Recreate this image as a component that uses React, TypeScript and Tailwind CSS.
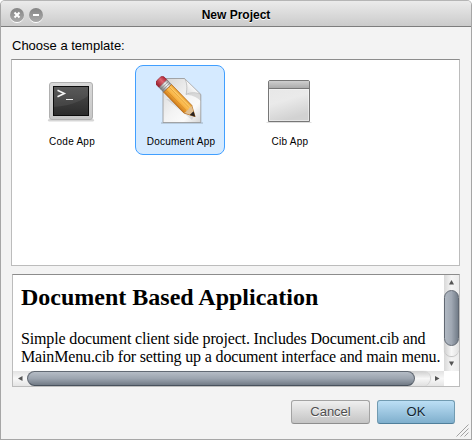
import React from "react";

function CodeIcon() {
  return (
    <svg width="48" height="48" viewBox="0 0 48 48">
      <defs>
        <linearGradient id="screen" x1="0" y1="0" x2="0" y2="1">
          <stop offset="0" stopColor="#4e4e4e" />
          <stop offset="1" stopColor="#2b2b2b" />
        </linearGradient>
        <linearGradient id="bezel" x1="0" y1="0" x2="0" y2="1">
          <stop offset="0" stopColor="#d8d8d8" />
          <stop offset="1" stopColor="#c6c6c6" />
        </linearGradient>
      </defs>
      <rect x="1" y="43" width="46" height="2.5" rx="1.2" fill="#000" opacity="0.16" />
      <rect x="2.5" y="6.5" width="43" height="37" rx="2.5" fill="url(#bezel)" stroke="#b0b0b0" />
      <rect x="6.5" y="10.5" width="35" height="29" fill="url(#screen)" stroke="#0c0c0c" />
      <path d="M7 11H41V20C31 27 20 30 7 31Z" fill="#fff" opacity="0.07" />
      <path d="M10.5 14.2L17.3 17.5L10.5 20.8" fill="none" stroke="#f4f4f4" strokeWidth="1.6" />
      <path d="M19 23.5H26" stroke="#eee" strokeWidth="1.1" />
    </svg>
  );
}

function DocumentIcon() {
  return (
    <svg width="48" height="48" viewBox="0 0 48 48">
      <defs>
        <linearGradient id="paper" x1="0" y1="0" x2="1" y2="1">
          <stop offset="0" stopColor="#d4d4d4" />
          <stop offset="0.5" stopColor="#f3f3f3" />
          <stop offset="0.75" stopColor="#fafafa" />
          <stop offset="1" stopColor="#d4d4d4" />
        </linearGradient>
        <linearGradient id="fold" x1="0" y1="1" x2="0.6" y2="0.4">
          <stop offset="0" stopColor="#d8d8d8" />
          <stop offset="1" stopColor="#fff" />
        </linearGradient>
        <linearGradient id="wood" x1="0" y1="0" x2="0" y2="1">
          <stop offset="0" stopColor="#e59a2c" />
          <stop offset="0.25" stopColor="#ffcb66" />
          <stop offset="0.6" stopColor="#f7b041" />
          <stop offset="1" stopColor="#cb7818" />
        </linearGradient>
        <linearGradient id="metal" x1="0" y1="0" x2="0" y2="1">
          <stop offset="0" stopColor="#999" />
          <stop offset="0.35" stopColor="#f4f4f4" />
          <stop offset="1" stopColor="#777" />
        </linearGradient>
        <linearGradient id="eraser" x1="0" y1="0" x2="0" y2="1">
          <stop offset="0" stopColor="#ad2335" />
          <stop offset="0.4" stopColor="#dd6570" />
          <stop offset="1" stopColor="#951c2c" />
        </linearGradient>
      </defs>
      <path d="M5 47H47" stroke="#7d8a96" strokeWidth="1" opacity="0.6" />
      <path d="M7 2.5H28.5L44.8 18.500V46.500H7Z" fill="url(#paper)" stroke="#939393" strokeWidth="0.8" />
      <path d="M30 19C35 16.500 40 17 44.500 18.500V25C40 20 35 19 30 19Z" fill="#000" opacity="0.12" />
      <path d="M28.500 2.500L44.800 18.500C40 16 34 16.500 30 18.500C31.500 12 31 6 28.500 2.500Z" fill="url(#fold)" stroke="#a8a8a8" strokeWidth="0.6" />
      <path d="M10 23L36 44L38 40L20 24Z" fill="#000" opacity="0.09" />
      <g transform="translate(2.500 3) rotate(45.800)">
        <rect x="0" y="-5.500" width="9" height="11" rx="3" fill="url(#eraser)" stroke="#8e1e2b" strokeWidth="0.6" />
        <rect x="6.500" y="-5.500" width="6.500" height="11" fill="url(#metal)" stroke="#777" strokeWidth="0.5" />
        <path d="M8.700 -5.500V5.500M10.900 -5.500V5.500" stroke="#777" strokeWidth="0.6" />
        <path d="M13 -5.500H42L52.500 0L42 5.500H13Z" fill="url(#wood)" stroke="#b0671a" strokeWidth="0.7" />
        <path d="M13 -2H42M13 2.200H42" stroke="#c97a16" strokeWidth="0.6" opacity="0.65" />
        <path d="M42 -5.200L52 0L42 5.200C43 3.500 43 2.500 42 2C43 .5 43 -1 42 -2C43 -3 43 -4 42 -5.200Z" fill="#dfc096" />
        <path d="M47.500 -2.700L52.800 0L47.500 2.700Z" fill="#29221f" />
      </g>
    </svg>
  );
}

function CibIcon() {
  return (
    <svg width="48" height="48" viewBox="0 0 48 48">
      <defs>
        <linearGradient id="cibbar" x1="0" y1="0" x2="0" y2="1">
          <stop offset="0" stopColor="#cfcfcf" />
          <stop offset="1" stopColor="#a9a9a9" />
        </linearGradient>
        <linearGradient id="cibbody" x1="0" y1="0" x2="0.3" y2="1">
          <stop offset="0" stopColor="#e6e6e6" />
          <stop offset="0.55" stopColor="#eaeaea" />
          <stop offset="1" stopColor="#d2d2d2" />
        </linearGradient>
      </defs>
      <path d="M1.500 46.500H46.500" stroke="#000" opacity="0.12" />
      <path d="M3.500 45.500V6Q3.500 4.500 5 4.500H43Q44.500 4.500 44.500 6V45.500Z" fill="url(#cibbody)" stroke="#777" />
      <path d="M4 12.500V6Q4 5 5 5H43Q44 5 44 6V12.500Z" fill="url(#cibbar)" />
      <path d="M4 12.500H44" stroke="#777" />
      <path d="M4.500 44.500V13.500H43.500V44.500Z" fill="none" stroke="#fff" opacity="0.45" />
    </svg>
  );
}

function Template({ label, selected, children }: { label: string; selected?: boolean; children: React.ReactNode }) {
  return (
    <div
      className={
        selected
          ? "flex h-[90px] w-[90px] flex-col items-center rounded-lg border border-[#419fff] bg-[#d5eaff] pt-[10px]"
          : "flex h-[90px] w-[90px] flex-col items-center rounded-lg border border-transparent pt-[10px]"
      }
    >
      <div className="h-12 w-12">{children}</div>
      <div className="mt-[11px] pl-[2px] text-[10px] leading-[13px] tracking-[0.25px] whitespace-nowrap">{label}</div>
    </div>
  );
}

function TitleButton({ children }: { children: React.ReactNode }) {
  return (
    <div className="flex h-[14px] w-[14px] items-center justify-center rounded-full bg-linear-to-b from-[#858585] to-[#aaa] shadow-[0_1px_0_#fff]">
      <svg width="8" height="8" viewBox="0 0 8 8" stroke="#fff" strokeWidth="2" fill="none">
        {children}
      </svg>
    </div>
  );
}

export default function App() {
  return (
    <div className="bg-white font-['Liberation_Sans',Arial,sans-serif] text-black">
      <div className="flex h-[440px] w-[472px] flex-col overflow-hidden rounded-t-[5px] border border-[#a6a6a6] border-t-[#b5b5b5] bg-[#f3f3f3]">
        <div className="flex h-[26px] shrink-0 items-center border-b border-[#7d7d7d] bg-linear-to-b from-[#ebebeb] to-[#cbcbcb] pl-[9px]">
          <div className="flex w-[60px] gap-[5px] pt-[3px]">
            <TitleButton><path d="M1.500 1.500L6.500 6.500M6.500 1.500L1.500 6.500" /></TitleButton>
            <TitleButton><path d="M1 4H7" /></TitleButton>
          </div>
          <div className="w-[332px] pt-[3px] text-center text-[12px] leading-[14px] font-bold [text-shadow:0_1px_0_#fff]">
            New Project
          </div>
        </div>
        <div className="mt-[11px] ml-[11px] h-4 text-[13px] leading-4">Choose a template:</div>
        <div className="mt-[5px] ml-[10px] flex h-[207px] w-[449px] shrink-0 gap-[19px] border border-[#bcbcbc] border-t-[#8c8c8c] bg-white pt-[5px] pl-[14px]">
          <Template label="Code App"><CodeIcon /></Template>
          <Template label="Document App" selected><DocumentIcon /></Template>
          <Template label="Cib App"><CibIcon /></Template>
        </div>
        <div className="mt-2 ml-[11px] grid h-[113px] w-[448px] shrink-0 grid-cols-[431px_15px] grid-rows-[96px_15px] border border-[#bcbcbc] border-t-[#8c8c8c] bg-white">
          <div className="overflow-hidden pt-[8px] pl-2 font-['Liberation_Serif',serif] whitespace-nowrap">
            <h1 className="text-[24px] leading-7 font-bold">Document Based Application</h1>
            <p className="mt-[19px] text-[16px] leading-[18px] tracking-[-0.15px]">
              Simple document client side project. Includes Document.cib and
              <br />
              MainMenu.cib for setting up a document interface and main menu.
            </p>
          </div>
          <div className="flex flex-col items-center bg-linear-to-r from-[#d9d9d9] via-[#f5f5f5] to-[#ececec]">
            <svg className="shrink-0" width="15" height="15" viewBox="0 0 15 15"><path d="M5 9.500L7.500 5L10 9.500Z" fill="#555" /></svg>
            <div className="h-[66px] w-[15px] shrink-0 rounded-full bg-linear-to-r from-[#cecece] via-[#f7f7f7] to-[#e0e0e0] shadow-[0_1px_1px_#bbb]">
              <div className="h-[56px] w-[15px] rounded-full border border-[#626973] bg-linear-to-r from-[#b0b8c2] via-[#a0a8b3] to-[#737d89]" />
            </div>
            <svg className="shrink-0" width="15" height="15" viewBox="0 0 15 15"><path d="M5 5.500L7.500 10L10 5.500Z" fill="#555" /></svg>
          </div>
          <div className="flex items-center bg-linear-to-b from-[#e2e2e2] via-[#f8f8f8] to-[#e5e5e5]">
            <svg className="shrink-0" width="14" height="15" viewBox="0 0 14 15"><path d="M9.500 5L5 7.500L9.500 10Z" fill="#555" /></svg>
            <div className="h-[15px] w-[403px] shrink-0 rounded-full bg-linear-to-b from-[#cecece] via-[#f7f7f7] to-[#e0e0e0] shadow-[1px_0_1px_#ccc]">
              <div className="h-[15px] w-[388px] rounded-full border border-[#626973] border-b-[#48515c] bg-linear-to-b from-[#b5bcc5] via-[#9ca4af] to-[#727b86]" />
            </div>
            <svg className="shrink-0" width="14" height="15" viewBox="0 0 14 15"><path d="M5 5L9.500 7.500L5 10Z" fill="#555" /></svg>
          </div>
          <div className="bg-white" />
        </div>
        <div className="mt-[13px] flex shrink-0 gap-[7px] pl-[290px] text-[13px]">
          <button className="h-6 w-[79px] rounded-[3px] border border-[#a3a3a3] border-b-[#8e8e8e] bg-linear-to-b from-[#efefef] to-[#c4c4c4] text-[#4f4f4f] [text-shadow:0_1px_0_#fff]">
            Cancel
          </button>
          <button className="h-6 w-[78px] rounded-[3px] border border-[#719bb1] border-b-[#507f9b] bg-linear-to-b from-[#bcdff5] to-[#7fafcd] text-[#14242f] [text-shadow:0_1px_0_#b9dcf0]">
            OK
          </button>
        </div>
        <svg className="ml-[455px] shrink-0" width="13" height="13" viewBox="0 0 13 13" fill="none">
          <path d="M0.500 12.500L12.500 0.500M4.500 12.500L12.500 4.500M8.500 12.500L12.500 8.500" stroke="#a2a2a2" />
        </svg>
      </div>
    </div>
  );
}
